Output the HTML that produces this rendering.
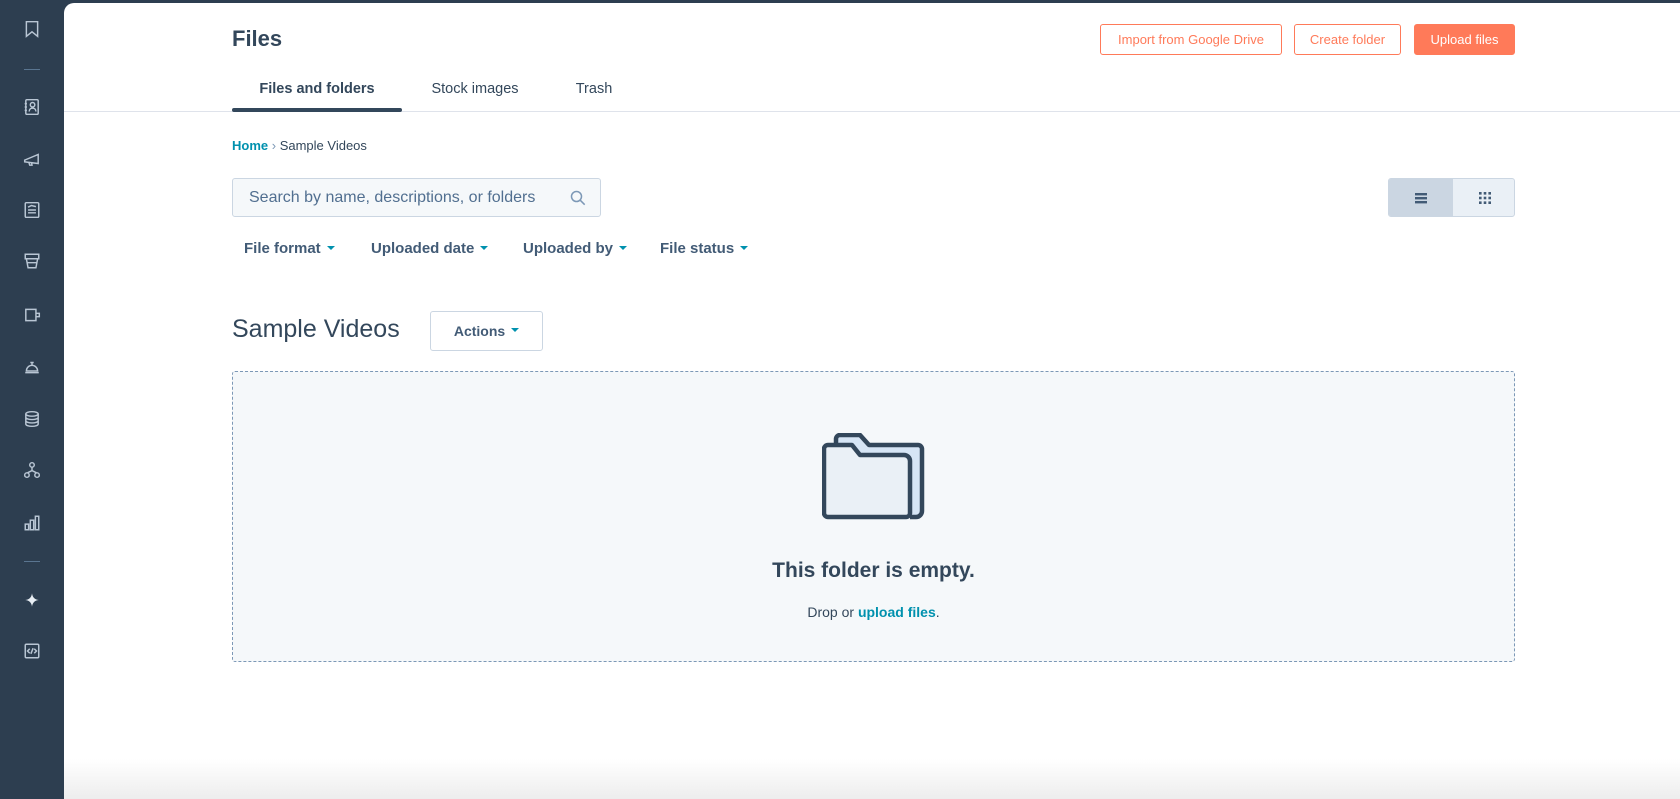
<!DOCTYPE html>
<html><head><meta charset="utf-8"><style>
*{box-sizing:border-box;margin:0;padding:0}
body{width:1680px;height:799px;overflow:hidden;background:#2d3e50;font-family:"Liberation Sans",sans-serif;color:#33475b;position:relative}
.main{position:absolute;left:64px;top:3px;width:1616px;height:796px;background:#fff;border-top-left-radius:10px;overflow:hidden}
.abs{position:absolute}
.sb svg{position:absolute;left:23px;width:18px;height:18px;fill:none;stroke:#b9c6d4;stroke-width:1.3}
.sbline{position:absolute;left:24px;width:16px;height:1px;background:#5a7590}
.btn{position:absolute;top:21px;height:31px;border:1px solid #ff7a59;border-radius:3px;color:#ff7a59;font-size:13px;display:flex;align-items:center;justify-content:center;background:#fff}
.tab{position:absolute;top:78px;font-size:14.5px;color:#33475b}
.flt{position:absolute;top:237px;font-size:15px;font-weight:bold;color:#425b76}
.car{display:inline-block;width:0;height:0;border-left:4px solid transparent;border-right:4px solid transparent;border-top:4px solid #0091ae;vertical-align:middle;margin-left:6px;margin-top:-2px}
</style></head><body>
<div class="sb">
<svg style="top:20px" viewBox="0 0 16 16"><path d="M3 1.5h10v13l-5-4-5 4z"/></svg>
<div class="sbline" style="top:69px"></div>
<svg style="top:98px" viewBox="0 0 16 16"><rect x="2.5" y="1.5" width="11" height="13" rx="1"/><circle cx="8.5" cy="6" r="2"/><path d="M5.5 12c0-2 1.5-3 3-3s3 1 3 3M1.5 5h2M1.5 8h2M1.5 11h2"/></svg>
<svg style="top:150px" viewBox="0 0 16 16"><path d="M1.5 9l12-5v8l-12-1.5zM5 10.5l1 3h2l-.5-2.7"/></svg>
<svg style="top:201px" viewBox="0 0 16 16"><rect x="2" y="1.5" width="12" height="13" rx="1"/><path d="M4.5 8h7M4.5 10.5h7M4.5 5.5l3-1.5 4 1"/></svg>
<svg style="top:252px" viewBox="0 0 16 16"><path d="M2 2h12v4H2zM3 6l1.5 8h7L13 6M3.5 9.5h9"/></svg>
<svg style="top:306px" viewBox="0 0 16 16"><path d="M2.5 3h9v10h-9z M11.5 6.5h3v3h-3"/></svg>
<svg style="top:358px" viewBox="0 0 16 16"><path d="M2 13h12M3 11.5a5 5 0 0110 0zM8 4v2.5M6.5 4h3"/></svg>
<svg style="top:410px" viewBox="0 0 16 16"><ellipse cx="8" cy="3.5" rx="5.5" ry="2"/><path d="M2.5 3.5v9c0 1.1 2.5 2 5.5 2s5.5-.9 5.5-2v-9M2.5 6.5c0 1.1 2.5 2 5.5 2s5.5-.9 5.5-2M2.5 9.5c0 1.1 2.5 2 5.5 2s5.5-.9 5.5-2"/></svg>
<svg style="top:461px" viewBox="0 0 16 16"><circle cx="8" cy="3.5" r="2"/><circle cx="3.5" cy="12.5" r="2"/><circle cx="12.5" cy="12.5" r="2"/><path d="M8 5.5v3M4 10.5l4-2 4 2"/></svg>
<svg style="top:514px" viewBox="0 0 16 16"><rect x="2" y="9" width="3" height="5"/><rect x="6.5" y="5.5" width="3" height="8.5"/><rect x="11" y="2" width="3" height="12"/></svg>
<div class="sbline" style="top:561px"></div>
<svg style="top:591px" viewBox="0 0 16 16"><path d="M8 2Q8.6 7.4 14 8Q8.6 8.6 8 14Q7.4 8.6 2 8Q7.4 7.4 8 2z" fill="#e8eef4" stroke="none"/></svg>
<svg style="top:642px" viewBox="0 0 16 16"><rect x="2" y="2" width="12" height="12" rx="1"/><path d="M6 6l-2 2 2 2M10 6l2 2-2 2M9 5.5l-2 5"/></svg>
</div>
<div class="main">
<div class="abs" style="left:168px;top:23px;font-size:22px;font-weight:bold">Files</div>
<div class="btn" style="left:1036px;width:182px">Import from Google Drive</div>
<div class="btn" style="left:1230px;width:107px">Create folder</div>
<div class="btn" style="left:1350px;width:101px;background:#ff7a59;color:#fff">Upload files</div>
<div class="tab" style="left:168px;width:170px;text-align:center;font-weight:bold">Files and folders</div>
<div class="tab" style="left:411px;width:0;white-space:nowrap"><span style="position:absolute;transform:translateX(-50%)">Stock images</span></div>
<div class="tab" style="left:530px;width:0;white-space:nowrap"><span style="position:absolute;transform:translateX(-50%)">Trash</span></div>
<div class="abs" style="left:0;top:108px;width:1616px;height:1px;background:#dfe3eb"></div>
<div class="abs" style="left:168px;top:105px;width:170px;height:4px;background:#33475b;border-radius:2px"></div>
<div class="abs" style="left:168px;top:135px;font-size:13px"><span style="color:#0091ae;font-weight:bold">Home</span> <span style="color:#7c98b6">&rsaquo;</span> Sample Videos</div>
<div class="abs" style="left:168px;top:175px;width:369px;height:39px;background:#f5f8fa;border:1px solid #cbd6e2;border-radius:3px;font-size:16px;color:#516f90;padding:10px 0 0 16px">Search by name, descriptions, or folders
<svg style="position:absolute;right:14px;top:11px" width="16" height="16" viewBox="0 0 16 16" fill="none" stroke="#7c98b6" stroke-width="1.5"><circle cx="6.5" cy="6.5" r="5"/><path d="M10.2 10.2l4.5 4.5"/></svg></div>
<div class="abs" style="left:1324px;top:175px;width:127px;height:39px;border:1px solid #cbd6e2;border-radius:3px;background:#eaf0f6;overflow:hidden">
<div style="position:absolute;left:0;top:0;width:64px;height:100%;background:#cbd6e2"></div>
<svg style="position:absolute;left:26px;top:13px" width="12" height="12" viewBox="0 0 12 12" fill="#425b76"><rect y="1" width="12" height="2.4"/><rect y="5" width="12" height="2.4"/><rect y="9" width="12" height="2.4"/></svg>
<svg style="position:absolute;left:90px;top:13px" width="12" height="12" viewBox="0 0 12 12" fill="#425b76"><rect x="0" y="0" width="2.6" height="2.6"/><rect x="4.7" y="0" width="2.6" height="2.6"/><rect x="9.4" y="0" width="2.6" height="2.6"/><rect x="0" y="4.7" width="2.6" height="2.6"/><rect x="4.7" y="4.7" width="2.6" height="2.6"/><rect x="9.4" y="4.7" width="2.6" height="2.6"/><rect x="0" y="9.4" width="2.6" height="2.6"/><rect x="4.7" y="9.4" width="2.6" height="2.6"/><rect x="9.4" y="9.4" width="2.6" height="2.6"/></svg>
</div>
<div class="flt" style="left:180px">File format<span class="car"></span></div>
<div class="flt" style="left:307px">Uploaded date<span class="car"></span></div>
<div class="flt" style="left:459px">Uploaded by<span class="car"></span></div>
<div class="flt" style="left:596px">File status<span class="car"></span></div>
<div class="abs" style="left:168px;top:312px;font-size:25px;font-weight:300;color:#33475b">Sample Videos</div>
<div class="abs" style="left:366px;top:308px;width:113px;height:40px;border:1px solid #cbd6e2;border-radius:3px;font-size:14px;font-weight:bold;color:#425b76;display:flex;align-items:center;justify-content:center">Actions<span class="car"></span></div>
<div class="abs" style="left:168px;top:368px;width:1283px;height:291px;background:#f5f8fa;border:1px dashed #7c98b6;border-radius:3px"></div>
<svg class="abs" style="left:758px;top:430px" width="104" height="88" viewBox="0 0 104 88" fill="none" stroke="#33475b" stroke-width="4.5" stroke-linejoin="round">
<path d="M14 12V6a4 4 0 014-4h20l9 10h49a4 4 0 014 4v62a6 6 0 01-6 6H88" fill="#d6e5f5"/>
<path d="M2 16a4 4 0 014-4h24l8 10h44a6 6 0 016 6v52a4 4 0 01-4 4H6a4 4 0 01-4-4z" fill="#eaf0f6"/>
</svg>
<div class="abs" style="left:168px;top:556px;width:1283px;text-align:center;font-size:21px;font-weight:bold">This folder is empty.</div>
<div class="abs" style="left:168px;top:601px;width:1283px;text-align:center;font-size:14px">Drop or <b style="color:#0091ae">upload files</b>.</div>
<div class="abs" style="left:0;top:756px;width:1616px;height:40px;background:linear-gradient(#fff0,#ededed)"></div>
</div>
</body></html>
